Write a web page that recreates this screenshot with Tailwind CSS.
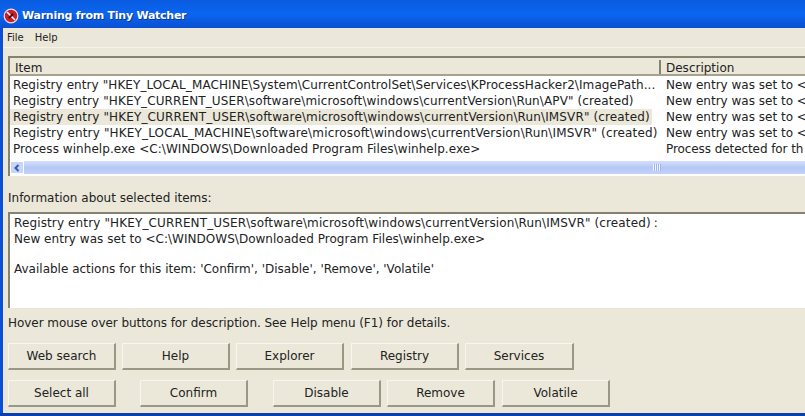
<!DOCTYPE html>
<html lang="en">
<head>
    <meta charset="UTF-8">
    <title>Warning from Tiny Watcher</title>
    <script src="https://cdn.jsdelivr.net/npm/@tailwindcss/browser@4"></script>
</head>
<body class="w-[805px] h-[416px] overflow-hidden bg-[#ebe8d9] text-[#222] font-['DejaVu_Sans',sans-serif] text-[12px] leading-4">

    <!-- title bar -->
    <div class="h-[28px] flex items-center pl-[3px] pt-[4px] gap-[3px] bg-gradient-to-b from-[#0a5be0] via-[#0a66f0] to-[#0a4fd0]">
        <svg width="16" height="16" viewBox="0 0 16 16" class="-mt-[1px]">
            <circle cx="8" cy="8" r="6.8" fill="#c8202a" stroke="#f6dede" stroke-width="1.2"/>
            <path d="M4 4l8 8" stroke="#fff" stroke-width="1.6"/>
            <path d="M5.2 9.5L9.5 5.2l1.3 1.3-4.3 4.3z" fill="#3a0a10"/>
        </svg>
        <span class="font-bold text-white text-[11px] tracking-[-0.25px] [text-shadow:1px_1px_0_#0a3a9a]">Warning from Tiny Watcher</span>
    </div>

    <div class="flex border-l-[3px] border-[#0a4fd8] h-[385px]">
        <div class="flex-1 min-w-0 overflow-hidden">
            <!-- menu -->
            <div class="h-[20px] flex items-center gap-[11px] pl-[4px] text-[10px] border-b border-[#f5f3ea]">
                <span>File</span>
                <span>Help</span>
            </div>

            <!-- item list -->
            <div class="ml-[5px] mt-[8px] border-t-2 border-l-2 border-[#85826f] bg-white w-[797px]">
                <div class="h-[18px] pt-[2px] flex bg-[#ebe8d9] border-b-2 border-[#a5a28f]">
                    <div class="w-[651px] shrink-0 pl-[5px] border-r-2 border-[#85826f]">Item</div>
                    <div class="pl-[5px] shrink-0">Description</div>
                </div>
                <div class="pt-[1px] whitespace-nowrap">
                    <div class="flex h-[16px]">
                        <div class="w-[653px] shrink-0 pl-[3px] tracking-[0.08px]">Registry entry "HKEY_LOCAL_MACHINE\System\CurrentControlSet\Services\KProcessHacker2\ImagePath...</div>
                        <div class="pl-[3px] shrink-0">New entry was set to &lt;</div>
                    </div>
                    <div class="flex h-[16px]">
                        <div class="w-[653px] shrink-0 pl-[3px] tracking-[0.115px]">Registry entry "HKEY_CURRENT_USER\software\microsoft\windows\currentVersion\Run\APV" (created)</div>
                        <div class="pl-[3px] shrink-0">New entry was set to &lt;</div>
                    </div>
                    <div class="flex h-[16px]">
                        <div class="w-[653px] shrink-0"><span class="inline-block w-[642px] pl-[3px] bg-[#ebe8d9] tracking-[0.13px]">Registry entry "HKEY_CURRENT_USER\software\microsoft\windows\currentVersion\Run\IMSVR" (created)</span></div>
                        <div class="pl-[3px] shrink-0">New entry was set to &lt;</div>
                    </div>
                    <div class="flex h-[16px]">
                        <div class="w-[653px] shrink-0 pl-[3px] tracking-[0.16px]">Registry entry "HKEY_LOCAL_MACHINE\software\microsoft\windows\currentVersion\Run\IMSVR" (created)</div>
                        <div class="pl-[3px] shrink-0">New entry was set to &lt;</div>
                    </div>
                    <div class="flex h-[16px]">
                        <div class="w-[653px] shrink-0 pl-[3px] tracking-[0.06px]">Process winhelp.exe &lt;C:\WINDOWS\Downloaded Program Files\winhelp.exe&gt;</div>
                        <div class="pl-[3px] shrink-0 tracking-[-0.08px]">Process detected for th</div>
                    </div>
                </div>
                <!-- scrollbar -->
                <div class="mt-[4px] h-[15px] flex items-center border-b-2 border-white bg-gradient-to-b from-[#d5e0fb] via-[#b4c8f6] to-[#c3d3f8]">
                    <div class="w-[14px] h-[13px] flex items-center justify-center bg-[#c5d6fa] border border-white">
                        <svg width="8" height="8" viewBox="0 0 8 8"><path d="M5.5 1L2.5 4l3 3" fill="none" stroke="#3a5aa8" stroke-width="2"/></svg>
                    </div>
                    <div class="ml-[629px] w-[8px] h-[7px] bg-[repeating-linear-gradient(90deg,#eef3ff_0_1px,#9fb5ea_1px_2px)]"></div>
                </div>
            </div>

            <!-- details -->
            <div class="mt-[14px] pl-[5px] h-[16px]">Information about selected items:</div>
            <div class="ml-[5px] mt-[6px] w-[797px] h-[96px] border-t-2 border-l-2 border-[#85826f] bg-white pl-[4px] pt-[1px] whitespace-nowrap">
                <div class="tracking-[0.13px]">Registry entry "HKEY_CURRENT_USER\software\microsoft\windows\currentVersion\Run\IMSVR" (created)<span class="ml-[3px]">:</span></div>
                <div class="tracking-[0.03px]">New entry was set to &lt;C:\WINDOWS\Downloaded Program Files\winhelp.exe&gt;</div>
                <div class="mt-[14px]">Available actions for this item: 'Confirm', 'Disable', 'Remove', 'Volatile'</div>
            </div>

            <div class="mt-[7px] pl-[5px] h-[16px] tracking-[-0.05px]">Hover mouse over buttons for description. See Help menu (F1) for details.</div>

            <!-- buttons -->
            <div class="mt-[12px] pl-[5px] flex">
                <button class="w-[108px] h-[27px] bg-[#ebe8d9] border-t border-l border-t-[#f8f6ee] border-l-[#f8f6ee] border-r-2 border-b-2 border-r-[#9a9785] border-b-[#9a9785]">Web search</button>
                <button class="ml-[6px] w-[108px] h-[27px] bg-[#ebe8d9] border-t border-l border-t-[#f8f6ee] border-l-[#f8f6ee] border-r-2 border-b-2 border-r-[#9a9785] border-b-[#9a9785]">Help</button>
                <button class="ml-[6px] w-[108px] h-[27px] bg-[#ebe8d9] border-t border-l border-t-[#f8f6ee] border-l-[#f8f6ee] border-r-2 border-b-2 border-r-[#9a9785] border-b-[#9a9785]">Explorer</button>
                <button class="ml-[7px] w-[108px] h-[27px] bg-[#ebe8d9] border-t border-l border-t-[#f8f6ee] border-l-[#f8f6ee] border-r-2 border-b-2 border-r-[#9a9785] border-b-[#9a9785]">Registry</button>
                <button class="ml-[6px] w-[109px] h-[27px] bg-[#ebe8d9] border-t border-l border-t-[#f8f6ee] border-l-[#f8f6ee] border-r-2 border-b-2 border-r-[#9a9785] border-b-[#9a9785]">Services</button>
            </div>
            <div class="mt-[10px] pl-[5px] flex">
                <button class="w-[108px] h-[27px] bg-[#ebe8d9] border-t border-l border-t-[#f8f6ee] border-l-[#f8f6ee] border-r-2 border-b-2 border-r-[#9a9785] border-b-[#9a9785]">Select all</button>
                <button class="ml-[24px] w-[108px] h-[27px] bg-[#ebe8d9] border-t border-l border-t-[#f8f6ee] border-l-[#f8f6ee] border-r-2 border-b-2 border-r-[#9a9785] border-b-[#9a9785]">Confirm</button>
                <button class="ml-[25px] w-[108px] h-[27px] bg-[#ebe8d9] border-t border-l border-t-[#f8f6ee] border-l-[#f8f6ee] border-r-2 border-b-2 border-r-[#9a9785] border-b-[#9a9785]">Disable</button>
                <button class="ml-[6px] w-[108px] h-[27px] bg-[#ebe8d9] border-t border-l border-t-[#f8f6ee] border-l-[#f8f6ee] border-r-2 border-b-2 border-r-[#9a9785] border-b-[#9a9785]">Remove</button>
                <button class="ml-[7px] w-[108px] h-[27px] bg-[#ebe8d9] border-t border-l border-t-[#f8f6ee] border-l-[#f8f6ee] border-r-2 border-b-2 border-r-[#9a9785] border-b-[#9a9785]">Volatile</button>
            </div>
        </div>
    </div>

    <div class="h-[3px] bg-[#0a3fb0]"></div>
</body>
</html>
